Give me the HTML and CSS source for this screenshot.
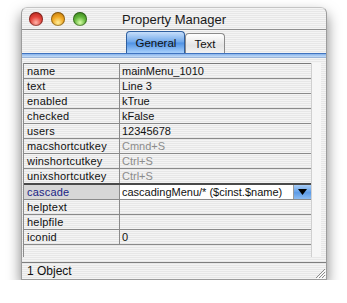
FILE: index.html
```html
<!DOCTYPE html>
<html>
<head>
<meta charset="utf-8"/>
<link rel="stylesheet" href="styles.css">
</head>
<body>

<div class="window">

<div class="titlebar">
  <div class="lights">
    <span class="light red"></span>
    <span class="light yellow"></span>
    <span class="light green"></span>
  </div>
  <div class="title">Property Manager</div>
  <div></div>
</div>

<div class="tabbar">
  <div class="tab active">General</div>
  <div class="tab">Text</div>
</div>
<div class="tabline"></div>

<div class="content">
  <div class="list">
    <table class="props">
      <tr><td class="key">name</td><td>mainMenu_1010</td></tr>
      <tr><td class="key">text</td><td>Line 3</td></tr>
      <tr><td class="key">enabled</td><td>kTrue</td></tr>
      <tr><td class="key">checked</td><td>kFalse</td></tr>
      <tr><td class="key">users</td><td>12345678</td></tr>
      <tr><td class="key">macshortcutkey</td><td class="dim">Cmnd+S</td></tr>
      <tr><td class="key">winshortcutkey</td><td class="dim">Ctrl+S</td></tr>
      <tr><td class="key">unixshortcutkey</td><td class="dim">Ctrl+S</td></tr>
      <tr class="current">
        <td class="key">cascade</td>
        <td class="edit">
          <div class="combo">
            <span class="field">cascadingMenu/* ($cinst.$name)</span>
            <span class="drop">
              <svg width="9" height="6" viewBox="0 0 9 6"><path d="M0 0 H9 L4.5 6 Z" fill="#000"/></svg>
            </span>
          </div>
        </td>
      </tr>
      <tr><td class="key">helptext</td><td></td></tr>
      <tr><td class="key">helpfile</td><td></td></tr>
      <tr><td class="key">iconid</td><td>0</td></tr>
    </table>
    <div class="gutter"></div>
  </div>
</div>

<div class="status">
  <span>1 Object</span>
  <svg class="grip" width="12" height="12" viewBox="0 0 12 12">
    <path d="M11 2 L2 11 M11 5 L5 11 M11 8 L8 11" stroke="#8c8c8c" stroke-width="1"/>
    <path d="M12 3 L3 12 M12 6 L6 12 M12 9 L9 12" stroke="#ffffff" stroke-width="1"/>
  </svg>
</div>

</div>

</body>
</html>
```

FILE: styles.css
```css
body {
  margin: 0;
  padding: 7px 0 0 21px;
  background: #fff;
  font-family: "Liberation Sans", Arial, sans-serif;
}

.window {
  width: 306px;
  height: 273px;
  box-sizing: border-box;
  display: flex;
  flex-direction: column;
  border: 1px solid #9c9c9c;
  border-top-color: #c4c4c4;
  border-radius: 6px 6px 0 0;
  background: repeating-linear-gradient(#f4f4f4 0 1px, #e7e7e7 1px 2px);
  box-shadow: 0 7px 14px rgba(0, 0, 0, 0.5);
}

/* title bar */
.titlebar {
  height: 21px;
  flex: none;
  display: grid;
  grid-template-columns: 1fr auto 1fr;
  align-items: center;
  border-bottom: 1px solid #8e8e8e;
}

.lights {
  display: flex;
  gap: 8px;
  padding-left: 7px;
}

.light {
  width: 14px;
  height: 14px;
  border-radius: 50%;
  box-shadow: inset 0 0 0 1px rgba(0, 0, 0, 0.35);
}
.light.red {
  background: radial-gradient(circle at 50% 75%, #ffb3a8 0, #e4453c 45%, #a11b12 100%);
}
.light.yellow {
  background: radial-gradient(circle at 50% 75%, #ffee9a 0, #f0a823 45%, #b26a05 100%);
}
.light.green {
  background: radial-gradient(circle at 50% 75%, #d8ffa8 0, #62b63a 45%, #2d7412 100%);
}

.title {
  font-size: 13px;
  color: #1a1a1a;
  padding-top: 1px;
}

/* tabs */
.tabbar {
  height: 23px;
  flex: none;
  display: flex;
  justify-content: center;
  align-items: flex-end;
  padding-left: 3px;
}

.tab {
  font-size: 11.5px;
  color: #111;
  height: 20px;
  line-height: 21px;
  padding: 0 8px;
  box-sizing: border-box;
  border: 1px solid #8a8a8a;
  border-bottom: none;
  border-radius: 4px 4px 0 0;
  background: linear-gradient(#ffffff, #e4e4e4 60%, #f2f2f2);
}

.tab.active {
  height: 22px;
  line-height: 22px;
  padding: 0 8px;
  border-color: #2f5f9f;
  background: linear-gradient(#c7defa, #6ea7ea 48%, #4f92e4 52%, #a8d0fb);
}

.tabline {
  height: 5px;
  flex: none;
  box-sizing: border-box;
  border-top: 1px solid #3f73bf;
  border-bottom: 1px solid #9bb5d8;
  background: linear-gradient(#88b4ec, #c5dcf6);
}

/* property list */
.content {
  flex: 1;
  display: flex;
  padding: 5px 5px 5px 1px;
}

.list {
  flex: 1;
  display: flex;
  border-left: 1px solid #8c8c8c;
}

.props {
  width: 287px;
  height: 181px;
  border-collapse: collapse;
  font-size: 11px;
  border-top: 1px solid #7a7a7a;
  border-bottom: 1px solid #7a7a7a;
}

.props td {
  height: 14px;
  padding: 0 0 0 2px;
  border-bottom: 1px solid #8a8a8a;
  line-height: 14px;
  white-space: nowrap;
  color: #111;
}

.props td.key {
  width: 92px;
  padding-left: 3px;
  letter-spacing: 0.2px;
  border-right: 1px solid #8a8a8a;
}

.props td.dim {
  color: #8c8c8c;
}

.props tr.current td {
  border-top: 2px solid #4a4a4a;
}

.props tr.current td.key {
  background: #d7d7d7;
  color: #1b1f86;
}

.props td.edit {
  padding: 0;
}

.combo {
  display: flex;
  height: 14px;
}

.field {
  flex: 1;
  background: #fff;
  padding-left: 2px;
  border-right: 1px solid #9a9a9a;
}

.drop {
  width: 17px;
  display: flex;
  align-items: center;
  justify-content: center;
  background: linear-gradient(#a9cdf6, #5d9be6 55%, #8cbcf2);
}

.gutter {
  flex: 1;
  background: #f6f6f6;
  border-left: 1px solid #d0d0d0;
}

/* status bar */
.status {
  height: 17px;
  flex: none;
  box-sizing: border-box;
  display: flex;
  align-items: center;
  justify-content: space-between;
  border-top: 1px solid #7e7e7e;
  padding-left: 5px;
  font-size: 12px;
  color: #111;
}

.grip {
  align-self: flex-end;
}
```
